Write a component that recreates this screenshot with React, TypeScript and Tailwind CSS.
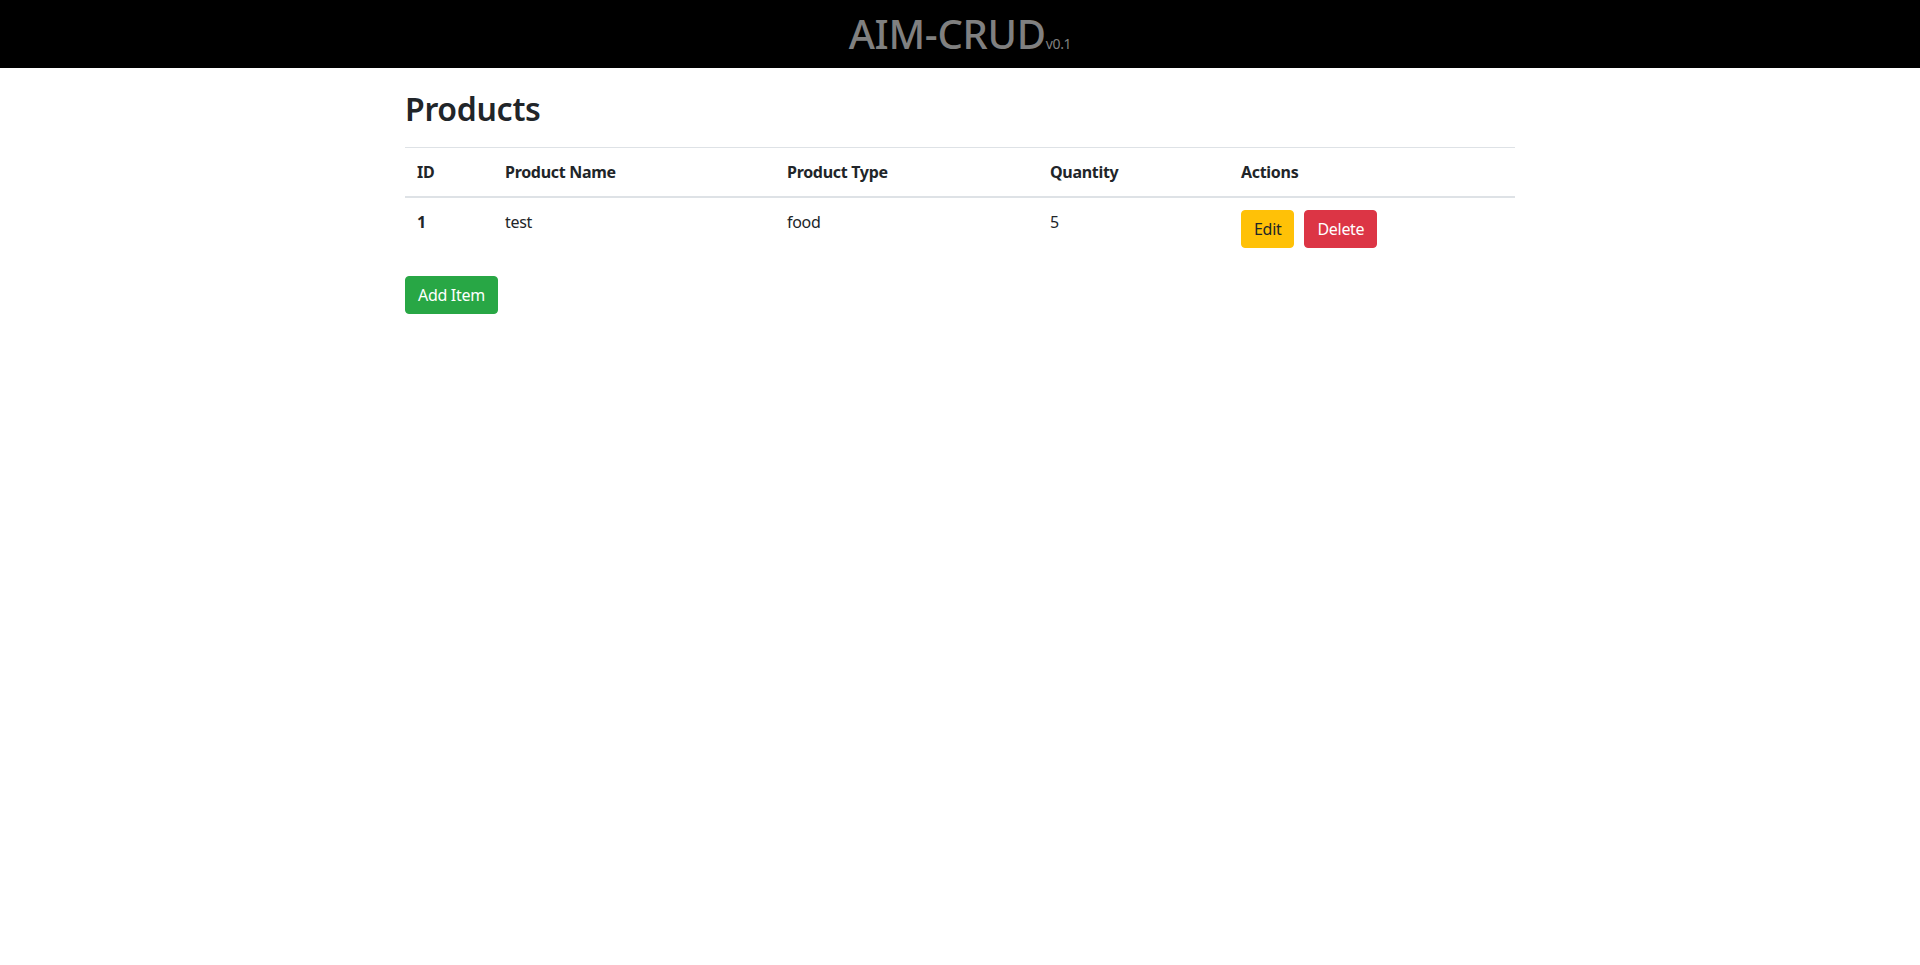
import React from "react";

export default function App() {
  const font = { fontFamily: '"Noto Sans", "Open Sans", sans-serif' };
  return (
    <div className="min-h-[965px] bg-white text-[#212529]" style={font}>
      <header className="bg-black h-[68px] flex items-center justify-center">
        <h1 className="text-[40px] leading-[48px] font-medium text-[#808080] flex items-baseline tracking-[-0.3px]">
          <span>AIM-CRUD</span>
          <small className="text-[14px] leading-none font-normal">v0.1</small>
        </h1>
      </header>
      <main className="mx-auto w-[1140px] px-[15px] pt-[22px]">
        <h2 className="text-[32px] leading-[38px] font-semibold mb-[19px] tracking-[-0.3px]">Products</h2>
        <table className="w-full table-fixed border-collapse mb-4 text-[16px] leading-6 tracking-[-0.3px]">
          <thead>
            <tr className="border-t border-[#dee2e6] border-b-2">
              <th className="w-[88px] p-3 text-left font-bold">ID</th>
              <th className="w-[282px] p-3 text-left font-bold">Product Name</th>
              <th className="w-[263px] p-3 text-left font-bold">Product Type</th>
              <th className="w-[191px] p-3 text-left font-bold">Quantity</th>
              <th className="p-3 text-left font-bold">Actions</th>
            </tr>
          </thead>
          <tbody>
            <tr>
              <th className="p-3 text-left align-top font-bold">1</th>
              <td className="p-3 align-top">test</td>
              <td className="p-3 align-top">food</td>
              <td className="p-3 align-top">5</td>
              <td className="p-3 align-top">
                <div className="flex gap-[10px]">
                  <button className="h-[38px] px-3 rounded bg-[#ffc107] border border-[#ffc107] text-[#212529] leading-6">Edit</button>
                  <button className="h-[38px] px-3 rounded bg-[#dc3545] border border-[#dc3545] text-white leading-6">Delete</button>
                </div>
              </td>
            </tr>
          </tbody>
        </table>
        <button className="h-[38px] px-3 rounded bg-[#28a745] border border-[#28a745] text-white text-[16px] leading-6 tracking-[-0.3px]">Add Item</button>
      </main>
    </div>
  );
}
